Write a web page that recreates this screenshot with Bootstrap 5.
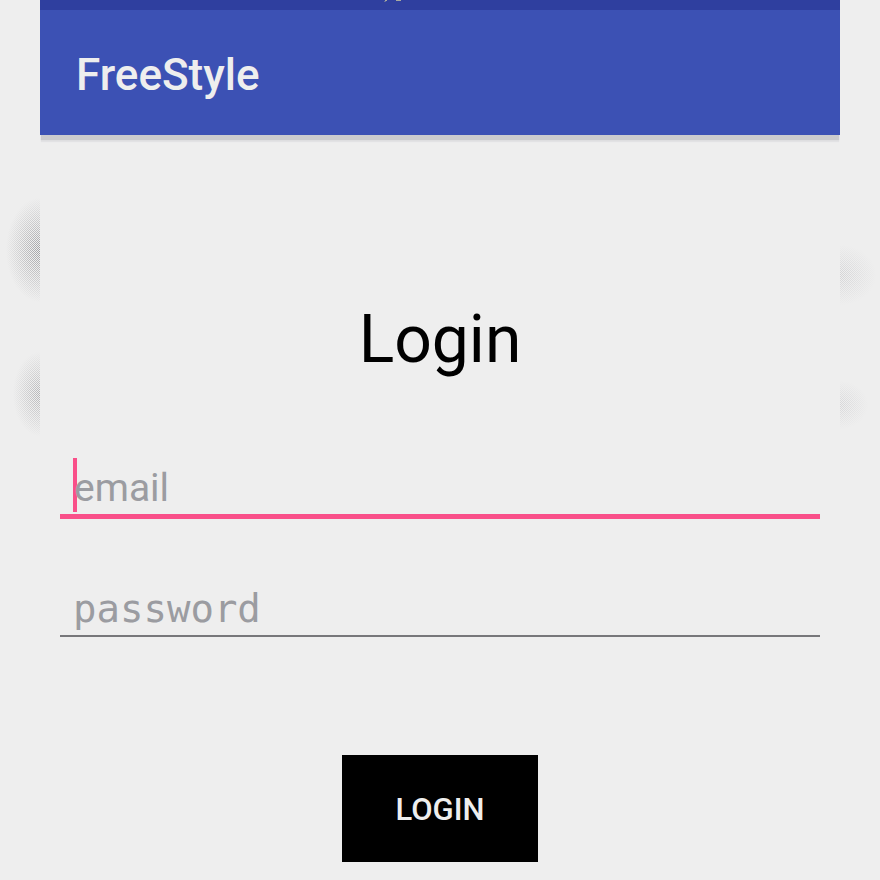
<!DOCTYPE html>
<html lang="en">
<head>
<meta charset="utf-8">
<meta name="viewport" content="width=device-width, initial-scale=1">
<title>FreeStyle</title>
<link href="https://cdn.jsdelivr.net/npm/bootstrap@5.3.0/dist/css/bootstrap.min.css" rel="stylesheet">
<style>
  body {
    font-family: Roboto, "Liberation Sans", sans-serif;
    color: #000;
    background-color: #eee;
  }
  /* soft smudges showing in the gutters on both sides of the app */
  .stage {
    padding: 0 40px;
    background:
      repeating-conic-gradient(#eee 0 25%, transparent 0 50%) 0 0 / 2px 2px,
      radial-gradient(34px 52px at 40px 250px, #a0a0a3, #eee0),
      radial-gradient(27px 42px at 40px 394px, #b4b4b6, #eee0),
      radial-gradient(36px 30px at calc(100% - 40px) 275px, #d3d3d5, #eee0),
      radial-gradient(28px 24px at calc(100% - 40px) 405px, #d6d6d8, #eee0),
      #eee;
  }
  .app { background-color: #eee; }
  .status-strip { height: 10px; background-color: #2f3f9f; }
  .app-bar {
    padding: 32px 36px 27px;
    background-color: #3c51b4;
    box-shadow: 0 6px 1px -1px #cbcbce, 0 8px 1px -1px #e2e2e4;
  }
  .app-title { font-size: 44px; line-height: 66px; font-weight: 500; color: #eee; }
  .login-form { padding: 165px 20px 18px; }
  .login-title { font-size: 66px; line-height: 80px; font-weight: 400; }
  .line-input {
    border: 0;
    border-radius: 0;
    outline: 0;
    background: transparent;
    font-size: 39px;
    line-height: 54px;
    color: #000;
  }
  .line-input::placeholder { color: #9b9ca1; opacity: 1; }
  .email-input {
    height: 61px;
    margin-top: 78px;
    padding: 4px 14px 0;
    border-bottom: 5px solid #f94f89;
    background: linear-gradient(#f94f89, #f94f89) 13px 0 / 4px 54px no-repeat;
  }
  .password-input {
    height: 58px;
    margin-top: 60px;
    padding: 2px 13px 0;
    border-bottom: 2px solid #77777a;
    font-family: "DejaVu Sans Mono", "Liberation Mono", monospace;
  }
  .login-btn {
    margin-top: 118px;
    padding: 2px 53px 0;
    border: 0;
    border-radius: 0;
    background-color: #000;
    color: #eee;
    font-size: 31px;
    line-height: 105px;
    font-weight: 500;
  }
</style>
</head>
<body>
<div class="stage min-vh-100">
  <div class="app min-vh-100">
    <div class="status-strip d-flex justify-content-center align-items-start">
      <svg width="114" height="10" viewBox="0 0 114 10" aria-hidden="true">
        <path d="M2 0h2v1h-2zM13 0h5v1h-5z" fill="#a9aaa0"/>
        <path d="M1 1h2v1h-2z" fill="#66709c"/>
      </svg>
    </div>
    <header class="app-bar">
      <div class="app-title">FreeStyle</div>
    </header>
    <main>
      <form class="login-form d-flex flex-column">
        <h1 class="login-title text-center mb-0">Login</h1>
        <input class="line-input email-input w-100" type="email" placeholder="email" aria-label="email">
        <input class="line-input password-input w-100" type="password" placeholder="password" aria-label="password">
        <button class="btn login-btn align-self-center" type="button">LOGIN</button>
      </form>
    </main>
  </div>
</div>
<script src="https://cdn.jsdelivr.net/npm/bootstrap@5.3.0/dist/js/bootstrap.bundle.min.js"></script>
</body>
</html>
